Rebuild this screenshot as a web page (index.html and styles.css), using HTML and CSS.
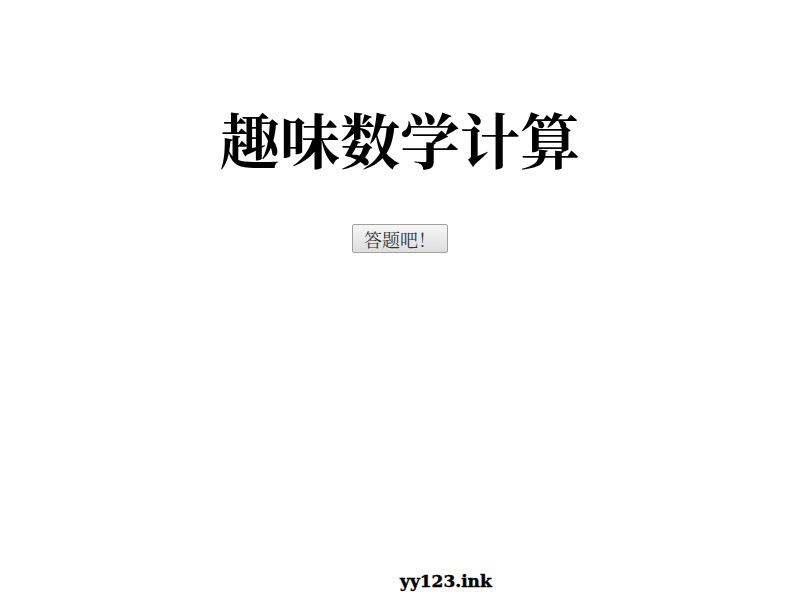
FILE: index.html
```html
<!DOCTYPE html>
<html lang="zh-CN">
<head>
<meta charset="utf-8">
<title>趣味数学计算</title>
<link rel="stylesheet" href="styles.css">
</head>
<body>
<main class="page">
  <h1 class="title">趣味数学计算</h1>
  <div class="actions">
    <button class="start" type="button">答题吧！</button>
  </div>
  <footer class="footer">yy123.ink</footer>
</main>
</body>
</html>
```

FILE: styles.css
```css
html, body {
  margin: 0;
  padding: 0;
  background: #ffffff;
}
.page {
  display: flex;
  flex-direction: column;
  height: 100vh;
  box-sizing: border-box;
  font-family: "Noto Serif CJK SC", "Liberation Serif", "Noto Sans CJK SC", serif;
}
.title {
  margin: 102px 0 0 0;
  text-align: center;
  font-size: 60px;
  line-height: 72px;
  font-weight: bold;
  color: #000;
}
.actions {
  display: flex;
  justify-content: center;
  margin-top: 50px;
}
.start {
  width: 96px;
  height: 29px;
  padding: 0;
  font-family: "Noto Serif CJK SC", "Liberation Serif", "Noto Sans CJK SC", serif;
  font-size: 18px;
  color: #333;
  background: linear-gradient(#f6f6f6, #dedede);
  border: 1px solid #a0a0a0;
  border-radius: 2px;
}
.footer {
  margin-top: auto;
  padding: 0 0 9px 50%;
  font-family: "DejaVu Serif", serif;
  font-weight: bold;
  font-size: 17px;
  line-height: 20px;
  color: #000;
  -webkit-text-stroke: 0.4px #000;
}
```
